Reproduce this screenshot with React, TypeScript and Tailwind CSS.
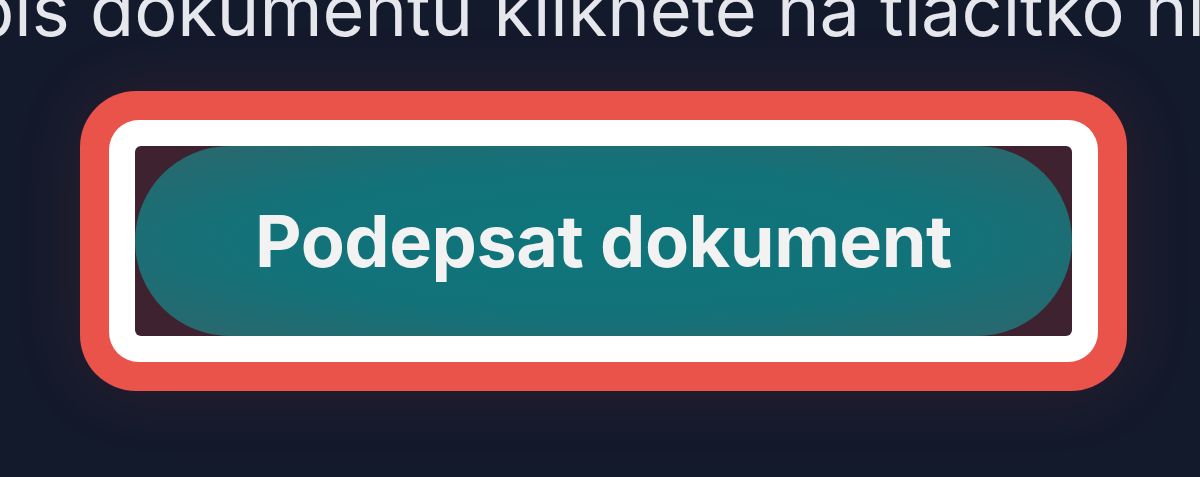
export default function App() {
  return (
    <div className="h-[477px] w-full overflow-hidden bg-[#131a2c] flex flex-col items-center font-['Inter','Noto_Sans',sans-serif]">
      <p className="mt-[-26px] mr-[190px] whitespace-nowrap text-[72px] leading-none text-[#e6e7ec]">
        Pro podpis dokumentu klikněte na tlačítko níže.
      </p>
      <div className="mt-[45px] ml-[7px] rounded-[56px] bg-[#e9534a] p-[29px] shadow-[0_0_70px_rgba(233,83,74,0.12)]">
        <div className="rounded-[30px] bg-white p-[26px]">
          <div className="rounded-[6px] bg-[#3e2230]">
            <button className="flex h-[190px] w-[937px] items-center justify-center rounded-full bg-[radial-gradient(ellipse_at_center,#0e757b_0%,#137279_55%,#2d666b_100%)] text-[72px] font-bold tracking-[-0.5px] text-[#f2f2f2]">
              Podepsat dokument
            </button>
          </div>
        </div>
      </div>
    </div>
  )
}
